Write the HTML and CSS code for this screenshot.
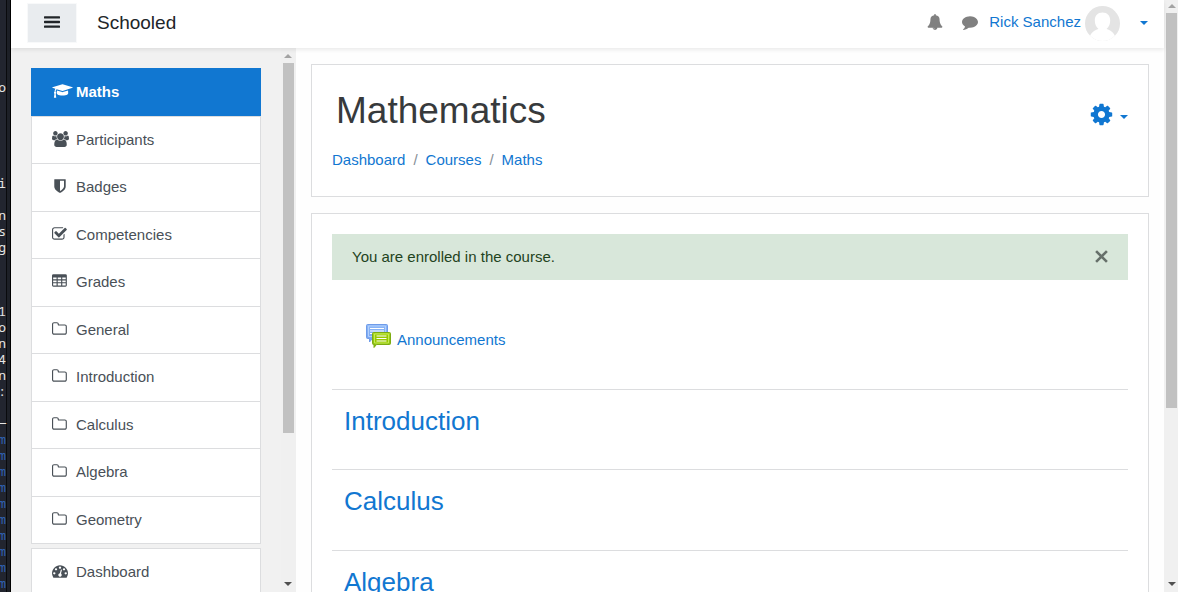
FILE: index.html
```html
<!DOCTYPE html>
<html lang="en">
<head>
<meta charset="utf-8">
<title>Course: Mathematics</title>
<link rel="stylesheet" href="styles.css">
</head>
<body>
<svg class="sprite" aria-hidden="true">
  <symbol id="cap" viewBox="0 0 2304 1792"><path d="M1774 836l18 316q4 69-82 128t-235 93.500-323 34.500-323-34.500-235-93.500-82-128l18-316 574 181q22 7 48 7t48-7zm530-324q0 23-22 31l-1120 352q-4 1-10 1t-10-1l-652-206q-43 34-71 111.500t-34 178.500q63 36 63 109 0 69-58 107l58 433q2 14-8 25-9 11-24 11h-192q-15 0-24-11-10-11-8-25l58-433q-58-38-58-107 0-73 65-111 11-207 98-330l-333-104q-22-8-22-31t22-31l1120-352q4-1 10-1t10 1l1120 352q22 8 22 31z"/></symbol>
  <symbol id="users" viewBox="64 0 1920 1792"><path d="M657 896q-162 5-265 128h-134q-82 0-138-40.500t-56-118.500q0-353 124-353 6 0 43.500 21t97.500 42.500 119 21.500q67 0 133-23-5 37-5 66 0 139 81 256zm1071 637q0 120-73 189.500t-194 69.500h-874q-121 0-194-69.500t-73-189.500q0-53 3.500-103.500t14-109 26.500-108.500 43-97.500 62-81 85.500-53.500 111.500-20q10 0 43 21.500t73 48 107 48 135 21.500 135-21.500 107-48 73-48 43-21.500q61 0 111.500 20t85.500 53.500 62 81 43 97.500 26.500 108.500 14 109 3.500 103.500zm-1024-1277q0 106-75 181t-181 75-181-75-75-181 75-181 181-75 181 75 75 181zm704 384q0 159-112.500 271.500t-271.500 112.500-271.500-112.500-112.500-271.500 112.500-271.500 271.500-112.500 271.500 112.500 112.500 271.500zm576 225q0 78-56 118.500t-138 40.500h-134q-103-123-265-128 81-117 81-256 0-29-5-66 66 23 133 23 59 0 119-21.500t97.500-42.500 43.500-21q124 0 124 353zm-128-609q0 106-75 181t-181 75-181-75-75-181 75-181 181-75 181 75 75 181z"/></symbol>
  <symbol id="shield" viewBox="0 0 1792 1792"><path d="M1344 960v-640h-448v1137q119-63 213-137 235-184 235-360zm192-768v768q0 86-33.500 170.500t-83 150-118 127.500-126.500 103-121 77.500-89.500 49.500-42.500 20q-12 6-26 6t-26-6q-16-7-42.500-20t-89.500-49.500-121-77.500-126.500-103-118-127.500-83-150-33.500-170.500v-768q0-26 19-45t45-19h1152q26 0 45 19t19 45z"/></symbol>
  <symbol id="check" viewBox="64 0 1792 1792"><path d="M1472 930v318q0 119-84.500 203.500t-203.500 84.500h-832q-119 0-203.500-84.500t-84.500-203.500v-832q0-119 84.500-203.500t203.500-84.500h832q63 0 117 25 15 7 18 23 3 17-9 29l-49 49q-10 10-23 10-3 0-9-2-23-6-45-6h-832q-66 0-113 47t-47 113v832q0 66 47 113t113 47h832q66 0 113-47t47-113v-254q0-13 9-22l64-64q10-10 23-10 6 0 12 3 20 8 20 29zm231-489l-814 814q-24 24-57 24t-57-24l-430-430q-24-24-24-57t24-57l110-110q24-24 57-24t57 24l263 263 647-647q24-24 57-24t57 24l110 110q24 24 24 57t-24 57z"/></symbol>
  <symbol id="table" viewBox="64 0 1792 1792"><path fill-rule="evenodd" d="M224 128h1344q160 0 160 160v1088q0 160-160 160H224q-160 0-160-160V288q0-160 160-160zM192 512v192h384V512zM704 512v192h384V512zM1216 512v192h384V512zM192 832v192h384V832zM704 832v192h384V832zM1216 832v192h384V832zM192 1152v256h384v-256zM704 1152v256h384v-256zM1216 1152v256h384v-256z"/></symbol>
  <symbol id="folder" viewBox="64 0 1792 1792"><path d="M1600 1312v-704q0-40-28-68t-68-28h-704q-40 0-68-28t-28-68v-64q0-40-28-68t-68-28h-320q-40 0-68 28t-28 68v960q0 40 28 68t68 28h1216q40 0 68-28t28-68zm128-704v704q0 92-66 158t-158 66h-1216q-92 0-158-66t-66-158v-960q0-92 66-158t158-66h320q92 0 158 66t66 158v32h672q92 0 158 66t66 158z"/></symbol>
  <symbol id="gauge" viewBox="0 0 1792 1792"><path d="M384 1152q0-53-37.500-90.500t-90.500-37.500-90.500 37.500-37.500 90.500 37.500 90.500 90.500 37.500 90.500-37.500 37.500-90.500zm192-448q0-53-37.500-90.500t-90.500-37.500-90.500 37.500-37.500 90.500 37.500 90.500 90.500 37.500 90.500-37.500 37.500-90.500zm428 481l101-382q6-26-7.500-48.500t-38.500-29.500-48 6.500-30 39.500l-101 382q-60 5-107 43.500t-63 98.500q-20 77 20 146t117 89 146-20 89-117q16-60-6-117t-72-91zm660-33q0-53-37.500-90.500t-90.500-37.500-90.500 37.500-37.500 90.500 37.500 90.500 90.500 37.500 90.500-37.500 37.500-90.500zm-640-640q0-53-37.500-90.500t-90.500-37.500-90.500 37.500-37.500 90.500 37.500 90.500 90.500 37.500 90.500-37.500 37.500-90.500zm448 192q0-53-37.500-90.500t-90.500-37.500-90.500 37.500-37.500 90.500 37.500 90.500 90.500 37.500 90.500-37.500 37.500-90.500zm320 448q0 261-141 483-19 29-54 29h-1402q-35 0-54-29-141-221-141-483 0-182 71-348t191-286 286-191 348-71 348 71 286 191 191 286 71 348z"/></symbol>
  <symbol id="bell" viewBox="0 0 1792 1792"><path d="M912 1696q0-16-16-16-59 0-101.500-42.500t-42.500-101.500q0-16-16-16t-16 16q0 73 51.500 124.500t124.500 51.500q16 0 16-16zm816-288q0 52-38 90t-90 38h-448q0 106-75 181t-181 75-181-75-75-181h-448q-52 0-90-38t-38-90q50-42 91-88t85-119.500 74.500-158.500 50-206 19.500-260q0-152 117-282.500t307-158.500q-8-19-8-39 0-40 28-68t68-28 68 28 28 68q0 20-8 39 190 28 307 158.500t117 282.500q0 139 19.500 260t50 206 74.500 158.500 85 119.500 91 88z"/></symbol>
  <symbol id="comment" viewBox="0 0 1792 1792"><path d="M1792 896q0 174-120 321.500t-326 233-450 85.500q-70 0-145-8-198 175-460 242-49 14-114 22-17 2-30.500-9t-17.500-29v-1q-3-4-.5-12t2-10 4.500-9.500l6-9 7-8.500 8-9q7-8 31-34.500t34.500-38 31-39.500 32.500-51 27-59 26-76q-157-89-247.500-220t-90.500-281q0-130 71-248.500t191-204.500 286-136.500 348-50.500q244 0 450 85.500t326 233 120 321.500z"/></symbol>
  <symbol id="cog" viewBox="0 0 1792 1792"><path d="M1152 896q0-106-75-181t-181-75-181 75-75 181 75 181 181 75 181-75 75-181zm512-109v222q0 12-8 23t-20 13l-185 28q-19 54-39 91 35 50 107 138 10 12 10 25t-9 23q-27 37-99 108t-94 71q-12 0-26-9l-138-108q-44 23-91 38-16 136-29 186-7 28-36 28h-222q-14 0-24.500-8.500t-11.500-21.500l-28-184q-49-16-90-37l-141 107q-10 9-25 9-14 0-25-11-126-114-165-168-7-10-7-23 0-12 8-23 15-21 51-66.500t54-70.500q-27-50-41-99l-183-27q-13-2-21-12.500t-8-23.500v-222q0-12 8-23t19-13l186-28q14-46 39-92-40-57-107-138-10-12-10-24 0-10 9-23 26-36 98.500-107.500t94.500-71.500q13 0 26 10l138 107q44-23 91-38 16-136 29-186 7-28 36-28h222q14 0 24.500 8.500t11.500 21.500l28 184q49 16 90 37l142-107q9-9 24-9 13 0 25 10 129 119 165 170 7 8 7 22 0 12-8 23-15 21-51 66.500t-54 70.500q26 50 41 98l183 28q13 2 21 12.500t8 23.500z"/></symbol>
  <symbol id="bars" viewBox="0 0 14 14"><path d="M0 2.500Q0 2 .5 2h13q.5 0 .5.500v1q0 .5-.5.500H.5Q0 4 0 3.500zM0 6.500Q0 6 .5 6h13q.5 0 .5.500v1q0 .5-.5.500H.5Q0 8 0 7.500zM0 10.500Q0 10 .5 10h13q.5 0 .5.500v1q0 .5-.5.500H.5Q0 12 0 11.500z"/></symbol>
</svg>

<div class="terminal" aria-hidden="true"><pre class="terminal-text">




o





i

n
s
g



1
o
n
4
n
:

─
<span class="prompt">m
m
m
m
m
m
m
m
m
m</span></pre></div>

<div class="app">
  <header class="navbar">
    <button class="drawer-toggle" type="button" aria-label="Side panel"><svg class="icon"><use href="#bars"/></svg></button>
    <a class="brand" href="#">Schooled</a>
    <div class="user-area">
      <button class="nav-icon" type="button" aria-label="Notifications"><svg class="icon"><use href="#bell"/></svg></button>
      <button class="nav-icon" type="button" aria-label="Messages"><svg class="icon"><use href="#comment"/></svg></button>
      <a class="user-link" href="#"><span>Rick Sanchez</span>
        <svg class="avatar" viewBox="0 0 35 35"><defs><clipPath id="round"><circle cx="17.500" cy="17.500" r="17.500"/></clipPath></defs><g clip-path="url(#round)"><path fill="#e4e4e4" d="M0 0h35v35H0z"/><path fill="#fff" d="M17.500 6.500c4.800 0 7.700 3.300 7.700 7.800 0 3.700-1.200 6.700-3.700 8.700 4.500 1.300 7.500 3.700 9 8.500L31 36H4l.5-4.500c1.500-4.800 4.500-7.200 9-8.500-2.500-2-3.700-5-3.700-8.700 0-4.500 2.900-7.800 7.700-7.800z"/></g></svg>
        <span class="caret"></span></a>
    </div>
  </header>

  <div class="body">
    <aside class="drawer">
      <nav class="menus">
        <ul class="menu">
          <li><a class="item active" href="#"><svg class="icon cap"><use href="#cap"/></svg>Maths</a></li>
          <li><a class="item" href="#"><svg class="icon wide"><use href="#users"/></svg>Participants</a></li>
          <li><a class="item" href="#"><svg class="icon"><use href="#shield"/></svg>Badges</a></li>
          <li><a class="item" href="#"><svg class="icon"><use href="#check"/></svg>Competencies</a></li>
          <li><a class="item" href="#"><svg class="icon"><use href="#table"/></svg>Grades</a></li>
          <li><a class="item" href="#"><svg class="icon"><use href="#folder"/></svg>General</a></li>
          <li><a class="item" href="#"><svg class="icon"><use href="#folder"/></svg>Introduction</a></li>
          <li><a class="item" href="#"><svg class="icon"><use href="#folder"/></svg>Calculus</a></li>
          <li><a class="item" href="#"><svg class="icon"><use href="#folder"/></svg>Algebra</a></li>
          <li><a class="item" href="#"><svg class="icon"><use href="#folder"/></svg>Geometry</a></li>
        </ul>
        <ul class="menu">
          <li><a class="item" href="#"><svg class="icon"><use href="#gauge"/></svg>Dashboard</a></li>
        </ul>
      </nav>
      <div class="scrollbar" aria-hidden="true"><span class="arrow up"></span><span class="thumb"></span><span class="rest"></span><span class="arrow down"></span></div>
    </aside>

    <main class="content">
      <section class="card heading-card">
        <div class="title-row">
          <h1>Mathematics</h1>
          <button class="settings" type="button" aria-label="Course settings"><svg class="cog"><use href="#cog"/></svg><span class="caret"></span></button>
        </div>
        <nav aria-label="Breadcrumb">
          <ol class="breadcrumb">
            <li><a href="#">Dashboard</a></li>
            <li><a href="#">Courses</a></li>
            <li><a href="#">Maths</a></li>
          </ol>
        </nav>
      </section>

      <section class="card course-card">
        <div class="alert" role="alert"><span>You are enrolled in the course.</span>
          <button class="close" type="button" aria-label="Dismiss"><svg viewBox="0 0 12 12"><path d="M1 1l10 10M11 1L1 11"/></svg></button></div>
        <a class="activity" href="#">
          <svg class="forum" viewBox="0 0 25 25">
            <defs>
              <linearGradient id="blue" x2="0" y2="1"><stop stop-color="#8db8f8"/><stop offset="1" stop-color="#76a3ef"/></linearGradient>
              <linearGradient id="green" x2="0" y2="1"><stop stop-color="#a8d51f"/><stop offset="1" stop-color="#83b80f"/></linearGradient>
            </defs>
            <path d="M1.500 1.500h19q1 0 1 1v12q0 1-1 1h-14l-3 3.500v-3.500h-2q-1 0-1-1v-12q0-1 1-1z" fill="url(#blue)" stroke="#6e9be9"/>
            <path d="M2.500 3h17v10.500h-17z" fill="none" stroke="#b3d0fc"/>
            <path d="M4 5.500h14M4 8h14M4 10.500h14" stroke="#fff" stroke-width="1.200"/>
            <path d="M7.500 9.500h16q1 0 1 1v10q0 1-1 1h-13l-2.500 3v-3h-.5q-1 0-1-1v-10q0-1 1-1z" fill="url(#green)" stroke="#7dab11"/>
            <path d="M8.500 11h14v9h-14z" fill="#98c800" stroke="#c5ec55"/>
            <path d="M10.500 13h10M10.500 15.500h10M10.500 18h10" stroke="#fff" stroke-width="1.200"/>
          </svg>
          <span>Announcements</span></a>
        <article class="topic"><h2><a href="#">Introduction</a></h2></article>
        <article class="topic"><h2><a href="#">Calculus</a></h2></article>
        <article class="topic"><h2><a href="#">Algebra</a></h2></article>
      </section>
    </main>
  </div>
</div>
<div class="scrollbar page" aria-hidden="true"><span class="arrow up"></span><span class="thumb"></span><span class="rest"></span><span class="arrow down"></span></div>
</body>
</html>
```
FILE: styles.css
```css
* { box-sizing: border-box; }

body {
  margin: 0;
  height: 100vh;
  display: flex;
  overflow: hidden;
  background: #fefefe;
  color: #373a3c;
  font: 15px/1.5 "Liberation Sans", Arial, sans-serif;
}

a { color: #1177d1; text-decoration: none; }
button { border: 0; padding: 0; background: none; font: inherit; color: inherit; }
ul, ol { list-style: none; margin: 0; padding: 0; }
h1, h2 { margin: 0; font-weight: 400; }

.sprite { position: absolute; width: 0; height: 0; }
.icon { width: 16px; height: 16px; fill: currentColor; flex: none; }

.caret {
  border: 4px solid transparent;
  border-top-color: #1177d1;
  border-bottom: 0;
}

/* Terminal window showing behind the browser */
.terminal {
  flex: none;
  width: 11px;
  padding: 15px 5px 0 0;
  display: flex;
  justify-content: flex-end;
  overflow: hidden;
  background: linear-gradient(90deg, #22252f 6px, #090a0d 6px, #090a0d 7px, #1d2027 7px, #1d2027 10px, #000 10px);
}
.terminal-text {
  margin: 0;
  color: #e6e6e6;
  font: 13px/16px "Noto Sans Mono", "DejaVu Sans Mono", monospace;
}
.prompt { color: #2f62b5; }

.app { flex: 1; min-width: 0; display: flex; flex-direction: column; }

.navbar {
  position: relative;
  flex: none;
  height: 48px;
  padding: 0 16px;
  display: flex;
  align-items: center;
  background: #fff;
  box-shadow: 0 2px 4px rgba(0, 0, 0, .08);
}
.drawer-toggle {
  width: 50px;
  height: 40px;
  margin-bottom: 2px;
  display: flex;
  align-items: center;
  justify-content: center;
  border: 1px solid #f8f9fa;
  background: #e9ecef;
  color: #212529;
}
.brand { margin-left: 20px; padding-bottom: 2px; font-size: 19px; color: #212529; }
.drawer-toggle .icon { margin-bottom: 2px; }
.user-area { margin-left: auto; padding-bottom: 3px; display: flex; align-items: center; gap: 19px; color: #808080; }
.nav-icon { display: flex; padding-bottom: 2px; }
.user-link { margin-left: -8px; display: flex; align-items: center; }
.avatar { width: 35px; height: 35px; margin: 2px 20px 0 4px; }

.body { flex: 1; min-height: 0; display: flex; }

.drawer { flex: none; width: 285px; display: flex; background: #f1f1f1; }
.menus { flex: 1; padding: 20px; overflow: hidden; }
.menu { border-bottom: 1px solid #dcdddf; margin-bottom: 4px; }
.item {
  display: flex;
  align-items: center;
  padding: 12px 20px;
  border: 1px solid #dcdddf;
  border-bottom: 0;
  background: #fff;
  color: #495057;
}
.item .icon { margin: 0 8px 2px 0; }
.item .wide { width: 17px; margin-right: 7px; }
.item .cap { width: 21px; margin-right: 3px; }
.item.active { border-color: #1177d1; background: #1177d1; color: #fff; font-weight: 700; }

.scrollbar {
  flex: none;
  width: 15px;
  padding: 6px 3px 6px 2px;
  display: flex;
  flex-direction: column;
  align-items: center;
  background: #f0f0f0;
}
.thumb { flex: 369; width: 11px; margin: 5px 0 0; background: #c1c1c1; }
.rest { flex: 149; }
.arrow { border: 4px solid transparent; }
.up { border-top: 0; border-bottom-color: #a3a3a3; }
.down { border-bottom: 0; border-top-color: #505050; }
.page { width: 14px; padding: 4px 1px 6px 2px; }
.page .thumb { flex: 395; }
.page .rest { flex: 174; }

.content { flex: 1; min-width: 0; padding: 16px 15px 0; overflow: hidden; }
.card { padding: 20px; border: 1px solid #dcdddf; background: #fff; }
.heading-card { margin-bottom: 16px; padding-bottom: 24px; }

.title-row { display: flex; align-items: center; justify-content: space-between; padding-left: 4px; }
h1 { font-size: 37px; line-height: 52px; }
.settings { display: flex; align-items: center; gap: 6px; padding-top: 6px; }
.cog { width: 25px; height: 25px; fill: #1177d1; }
.settings .caret { margin-top: 5px; }

.breadcrumb { display: flex; padding-top: 12px; }
.breadcrumb li + li::before { content: "/"; padding: 0 8px; color: #868e96; }

.alert {
  display: flex;
  align-items: center;
  justify-content: space-between;
  padding: 12px 20px;
  background: #d8e7da;
  color: #1f4321;
}
.close { display: flex; }
.close svg { width: 13px; height: 13px; fill: none; stroke: #66706a; stroke-width: 2.400; }

.activity { display: flex; align-items: flex-start; gap: 6px; padding: 43px 34px 37px; }
.activity span { padding-top: 6px; }
.forum { width: 25px; height: 25px; }

.topic { padding: 15px 12px 32px; border-top: 1px solid #dcdddf; }
h2 { font-size: 26px; line-height: 1.25; }
```
